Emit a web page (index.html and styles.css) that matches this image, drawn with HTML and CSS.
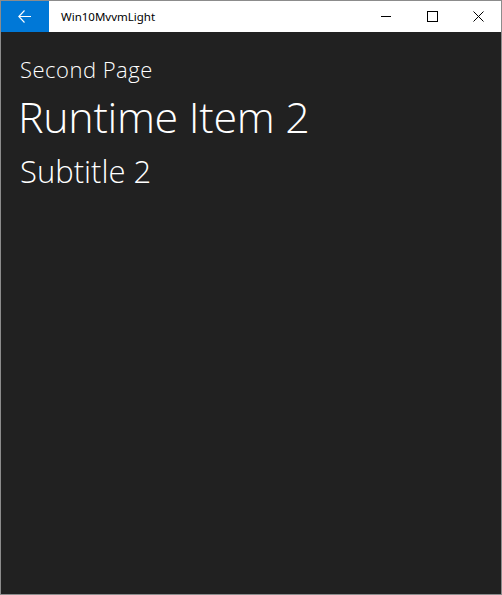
FILE: index.html
```html
<!DOCTYPE html>
<html>
<head>
<meta charset="utf-8">
<link rel="stylesheet" href="styles.css">
</head>
<body>
<div class="window">
  <div class="titlebar">
    <div class="back">
      <svg width="14" height="13" viewBox="0 0 14 13"><path d="M6.5 0.5 L0.8 6.5 L6.5 12.5 M0.8 6.5 H13" fill="none" stroke="#fff" stroke-width="1.1"/></svg>
    </div>
    <div class="apptitle">Win10MvvmLight</div>
    <div class="controls">
      <div class="ctl"><svg width="11" height="11" viewBox="0 0 11 11"><path d="M0 5.5 H10" stroke="#000" stroke-width="1"/></svg></div>
      <div class="ctl"><svg width="11" height="11" viewBox="0 0 11 11"><rect x="0.5" y="0.5" width="10" height="10" fill="none" stroke="#000" stroke-width="1"/></svg></div>
      <div class="ctl"><svg width="11" height="11" viewBox="0 0 11 11"><path d="M0.5 0.5 L10.5 10.5 M10.5 0.5 L0.5 10.5" stroke="#000" stroke-width="1"/></svg></div>
    </div>
  </div>
  <div class="content">
    <div class="page">Second Page</div>
    <div class="header">Runtime Item 2</div>
    <div class="subheader">Subtitle 2</div>
  </div>
</div>
</body>
</html>
```
FILE: styles.css
```css
html, body { margin: 0; padding: 0; }
body { width: 502px; height: 595px; overflow: hidden; background: #fff; }
.window {
  box-sizing: border-box;
  width: 502px; height: 595px;
  border: 1px solid #8c8c8c;
  display: flex; flex-direction: column;
  background: #212121;
}
.titlebar {
  height: 31px; flex: none;
  background: #fff;
  display: flex; align-items: center;
}
.back {
  width: 48px; height: 31px;
  background: #0078d7;
  display: flex; align-items: center; justify-content: center;
}
.apptitle {
  margin-left: 12px;
  font-family: "Noto Sans", "Open Sans", sans-serif;
  font-size: 11.5px; color: #000;
}
.controls { margin-left: auto; display: flex; }
.ctl { width: 46px; height: 31px; display: flex; align-items: center; justify-content: center; }
.ctl svg { display: block; }
.content {
  flex: 1;
  padding: 23px 0 0 19px;
  color: #fff;
  font-family: "Open Sans", "Noto Sans", sans-serif;
  font-weight: 300;
}
.page { font-size: 22px; line-height: 28px; letter-spacing: 0.5px; }
.header { font-size: 43px; line-height: 52px; margin-top: 8px; margin-left: -2px; letter-spacing: -0.3px; }
.subheader { font-size: 31px; line-height: 40px; margin-top: 8px; }
```
